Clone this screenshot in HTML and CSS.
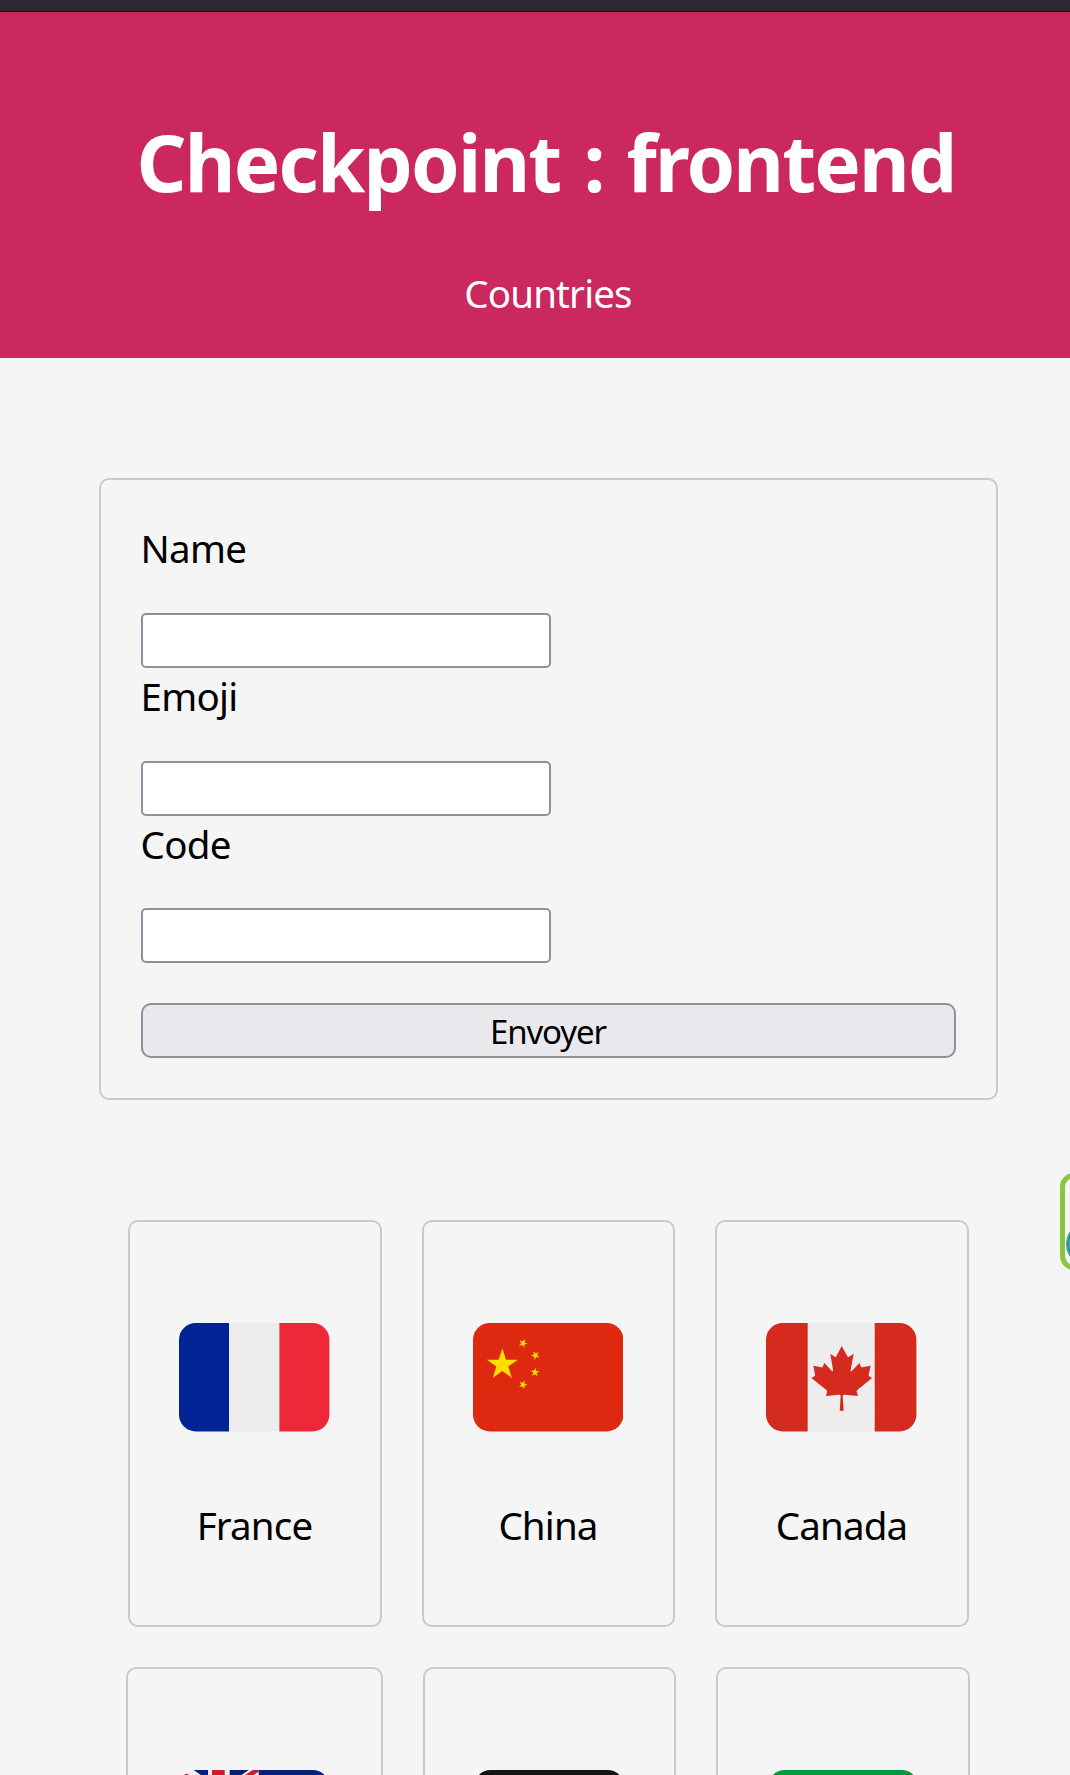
FILE: index.html
```html
<!DOCTYPE html>
<html lang="fr">
<head>
<meta charset="utf-8">
<title>Checkpoint : frontend</title>
<link rel="stylesheet" href="styles.css">
</head>
<body>
<div class="browser-edge"></div>
<div class="page">
  <header class="header">
    <h1 class="title">Checkpoint : frontend</h1>
    <p class="subtitle">Countries</p>
  </header>
  <main class="main">
    <form class="form">
      <label class="label" for="name">Name</label>
      <input class="input" id="name" type="text">
      <label class="label" for="emoji">Emoji</label>
      <input class="input" id="emoji" type="text">
      <label class="label label-last" for="code">Code</label>
      <input class="input" id="code" type="text">
      <button class="submit" type="button">Envoyer</button>
    </form>
    <section class="cards">
      <article class="card">
        <svg class="flag" viewBox="0 0 451 325"><path fill="#ededed" d="M150 0h151v325H150z"/><path fill="#002495" d="M150 0H50A50 50 0 0 0 0 50v225a50 50 0 0 0 50 50h100z"/><path fill="#ed2939" d="M301 0h100a50 50 0 0 1 50 50v225a50 50 0 0 1-50 50H301z"/></svg>
        <p class="country">France</p>
      </article>
      <article class="card card-narrow">
        <svg class="flag" viewBox="0 0 451 325"><defs><path id="star" d="M0-1 .2245-.309H.951L.363.118.588.809 0 .382-.588.809-.363.118-.951-.309H-.2245z"/></defs><rect width="451" height="325" rx="50" fill="#de2910"/><g fill="#ffde00"><use href="#star" transform="translate(88 125) scale(49)"/><use href="#star" transform="translate(150 61) rotate(23) scale(14)"/><use href="#star" transform="translate(187 97) rotate(46) scale(14)"/><use href="#star" transform="translate(186 148) rotate(4) scale(14)"/><use href="#star" transform="translate(150 185) rotate(22) scale(14)"/></g></svg>
        <p class="country">China</p>
      </article>
      <article class="card">
        <svg class="flag" viewBox="0 0 451 325"><path fill="#ededed" d="M125 0h201v325H125z"/><path fill="#d52b1e" d="M125 0H50A50 50 0 0 0 0 50v225a50 50 0 0 0 50 50h75zM326 0h75a50 50 0 0 1 50 50v225a50 50 0 0 1-50 50h-75zM227 69l17 31q2 3 5 1l14-9-9 49q-1 7 4 2l22-23 5 11q1 3 4 2l25-5-6 27q-1 4 2 5l8 5-44 36q-3 2-2 5l4 13-41-4q-5 0-5 4l3 44h-12l3-44q0-4-5-4l-39 4 3-13q1-3-2-5l-45-36 9-5q3-1 2-5l-5-27 24 5q3 1 4-2l5-11 22 23q5 5 4-2l-8-49 13 9q3 2 5-1z"/></svg>
        <p class="country">Canada</p>
      </article>
    </section>
    <section class="cards cards-next">
      <article class="card card-wide">
        <svg class="flag" viewBox="0 0 451 325"><defs><clipPath id="corner"><rect width="451" height="325" rx="50"/></clipPath></defs><g clip-path="url(#corner)"><path fill="#eee" d="M0 0h239v163H0z"/><path fill="#00247d" d="M239 0h212v325H0V163h239zM44 0h43v30zM152 0h57l-57 40z"/><path fill="#cf1b2b" d="M99 0h38v163H99zM191 20 221 0h18v5l-23 15zM17 12h9l12 8H17z"/></g></svg>
      </article>
      <article class="card card-narrow">
        <svg class="flag" viewBox="0 0 451 325"><rect width="451" height="325" rx="50" fill="#141414"/></svg>
      </article>
      <article class="card">
        <svg class="flag" viewBox="0 0 451 325"><rect width="451" height="325" rx="50" fill="#009b3a"/></svg>
      </article>
    </section>
  </main>
</div>
<div class="widget"><span class="widget-ring"></span></div>
</body>
</html>
```
FILE: styles.css
```css
* { box-sizing: border-box; }
html { overflow: hidden; }
body {
  position: relative;
  margin: 0;
  width: 1070px;
  height: 1775px;
  overflow: hidden;
  background: #f5f5f5;
  color: #000;
  font-family: "Noto Sans", "Open Sans", sans-serif;
  font-size: 38.5px;
  line-height: 55px;
}
h1, p { margin: 0; }
.browser-edge { height: 12px; background: #2b2a33; border-bottom: 1px solid #0c0c0d; }
/* content is slightly wider than the visible window */
.page { width: 1096px; height: 1763px; overflow: hidden; }
.header {
  height: 346px;
  padding-top: 98px;
  background: #cb2860;
  color: #fff;
  text-align: center;
}
.title {
  padding-right: 4px;
  font-size: 78px;
  line-height: 104px;
  letter-spacing: -1.8px;
  word-spacing: 4.5px;
  white-space: nowrap;
}
.subtitle { margin-top: 52px; letter-spacing: -.85px; }
.main { display: flex; flex-direction: column; align-items: center; padding-top: 120px; }
.form {
  display: flex;
  flex-direction: column;
  align-items: flex-start;
  width: 899px;
  height: 622px;
  padding: 40px;
  border: 2px solid #cacaca;
  border-radius: 10px;
}
.label { margin-bottom: 36px; line-height: 57px; letter-spacing: -.7px; }
.label-last { margin-bottom: 35px; }
.input {
  width: 410px;
  height: 55px;
  border: 2px solid #8f8f9d;
  border-radius: 5px;
  background: #fff;
}
.submit {
  align-self: stretch;
  height: 55px;
  margin-top: 40px;
  padding: 2px 0 0;
  border: 2px solid #8f8f9d;
  border-radius: 10px;
  background: #e9e9ed;
  color: #000;
  font: 33px/49px "Noto Sans", "Open Sans", sans-serif;
  letter-spacing: -1.1px;
}
.cards { display: flex; gap: 40px; margin-top: 120px; }
.cards-next { margin-top: 40px; }
.card {
  display: flex;
  flex-direction: column;
  align-items: center;
  width: 254px;
  height: 407px;
  padding-top: 101.4px;
  border: 2px solid #cacaca;
  border-radius: 10px;
}
.card-narrow { width: 253px; }
.card-wide { width: 257px; }
.flag { display: block; width: 150.4px; height: 108.4px; }
.country { margin-top: 66.5px; letter-spacing: -.85px; }
.widget {
  position: absolute;
  top: 1173px;
  right: -70px;
  width: 80px;
  height: 97px;
  border: 5px solid #8cc63f;
  border-radius: 14px;
}
.widget-ring {
  position: absolute;
  top: 51px;
  left: 1px;
  width: 18px;
  height: 30px;
  border: 4px solid #2f9a9f;
  border-radius: 50%;
}
```
